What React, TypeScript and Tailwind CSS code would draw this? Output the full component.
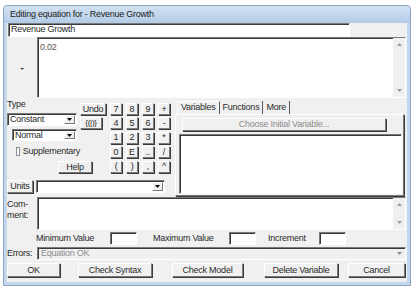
import React from 'react'

const raised =
  'border border-t-white border-l-white border-r-[#7a7a7a] border-b-[#7a7a7a] shadow-[1px_1px_0_#3a3a3a] bg-[#f0f0f0]'
const sunken =
  'border border-t-[#7a7a7a] border-l-[#7a7a7a] border-r-white border-b-white shadow-[inset_1px_1px_0_#3a3a3a]'

const keys = ['7', '8', '9', '+', '4', '5', '6', '-', '1', '2', '3', '*', '0', 'E', '..', '/', '(', ')', ',', '^']

function Tri({ up = false, color = '#000' }: { up?: boolean; color?: string }) {
  return (
    <svg width="5" height="3" viewBox="0 0 5 3">
      <path d={up ? 'M0 3h5L2.5 0z' : 'M0 0h5L2.5 3z'} fill={color} />
    </svg>
  )
}

function Btn({ className = '', children }: { className?: string; children?: React.ReactNode }) {
  return (
    <div className={`${raised} flex items-center justify-center leading-none ${className}`}>{children}</div>
  )
}

function Select({ className = '', text }: { className?: string; text?: string }) {
  return (
    <div className={`${sunken} bg-white flex items-stretch ${className}`}>
      <span className="flex-1 pl-[2px] flex items-center leading-none">{text}</span>
      <div className={`${raised} w-[11px] my-[1px] mr-[1px] flex items-center justify-center shadow-none`}>
        <Tri />
      </div>
    </div>
  )
}

function ScrollBar() {
  return (
    <div className="w-[12px] bg-[#f0f0f0] flex flex-col justify-between items-center py-[5px]">
      <Tri up color="#9a9a9a" />
      <Tri color="#9a9a9a" />
    </div>
  )
}

export default function App() {
  return (
    <div className="w-[416px] h-[290px] bg-white pl-[3px] pt-[5px] font-['Liberation_Sans',Arial,sans-serif] text-[9px] tracking-[-0.25px] text-[#2a2a2a]">
      <div className="w-[408px] h-[281px] bg-[#c4d7ed] border border-[#8da3bf] rounded-t-[4px] px-[3px] pb-[3px] flex flex-col">
        {/* title bar */}
        <div className="h-[17px] shrink-0 -mx-[3px] px-[6px] flex items-center rounded-t-[4px] bg-gradient-to-b from-[#d3e2f3] to-[#b3cbe7] text-[#222]">
          Editing equation for - Revenue Growth
        </div>

        <div className="flex-1 bg-[#f0f0f0] flex flex-col">
          {/* name */}
          <div className="h-[14px] flex">
            <div className={`${sunken} bg-white w-[342px] ml-[1px] flex items-center pl-[2px]`}>Revenue Growth</div>
          </div>

          {/* equation */}
          <div className="h-[61px] flex">
            <div className="w-[30px] flex items-center justify-center font-bold text-[10px]">-</div>
            <div className={`${sunken} bg-white flex-1 mr-[1px] flex`}>
              <div className="flex-1 pl-[2px] pt-[3px] text-[#555]">0.02</div>
              <ScrollBar />
            </div>
          </div>

          {/* middle */}
          <div className="h-[97px] mt-[1px] flex">
            <div className="w-[165px] flex flex-col">
              <div className="flex">
                <div className="w-[103px] flex flex-col">
                  <div className="flex">
                    <div className="w-[73px] flex flex-col">
                      <div className="h-[10px] leading-[10px]">Type</div>
                      <Select className="mt-[4px] h-[13px] w-[70px]" text="Constant" />
                      <Select className="mt-[3px] ml-[5px] h-[12px] w-[65px]" text="Normal" />
                      <div className="mt-[6px] ml-[9px] h-[9px] flex items-center gap-[3px]">
                        <div className="w-[9px] h-[9px] bg-white border border-[#8a8a8a]" />
                        <span>Supplementary</span>
                      </div>
                    </div>
                    <div className="w-[30px] flex flex-col">
                      <Btn className="mt-[4px] h-[12px] w-[26px]">Undo</Btn>
                      <Btn className="mt-[2px] h-[12px] w-[22px] text-[8px]">{'{(|)}'}</Btn>
                    </div>
                  </div>
                  <Btn className="mt-[5px] ml-[51px] h-[12px] w-[34px]">Help</Btn>
                </div>
                <div className="mt-[4px] grid grid-cols-[repeat(4,12px)] gap-x-[4px] gap-y-[2px]">
                  {keys.map((k) => (
                    <Btn key={k} className="h-[12px]">
                      {k}
                    </Btn>
                  ))}
                </div>
              </div>
              <div className="mt-[7px] h-[13px] flex">
                <Btn className="w-[26px]">Units</Btn>
                <Select className="ml-[3px] w-[129px]" />
              </div>
            </div>

            {/* tabs */}
            <div className="ml-[3px] w-[229px] flex flex-col">
              <div className="mt-[2px] h-[13px] flex pl-[2px]">
                <div className="px-[3px] flex items-center border-t border-l border-white border-r border-r-[#5a5a5a]">Variables</div>
                <div className="px-[3px] flex items-center border-r border-[#5a5a5a]">Functions</div>
                <div className="px-[3px] flex items-center border-r border-[#5a5a5a]">More</div>
              </div>
              <div className={`${raised} flex-1 flex flex-col`}>
                <Btn className="mt-[3px] ml-[6px] w-[204px] h-[13px] text-[#8e8e8e]">Choose Initial Variable...</Btn>
                <div className={`${sunken} bg-white mt-[3px] ml-[3px] mr-[1px] mb-[1px] flex-1`} />
              </div>
            </div>
          </div>

          {/* comment */}
          <div className="h-[33px] mt-[1px] flex">
            <div className="w-[30px] leading-[11px] pt-[2px]">
              Com-
              <br />
              ment:
            </div>
            <div className={`${sunken} bg-white flex-1 mr-[1px] flex`}>
              <div className="flex-1" />
              <ScrollBar />
            </div>
          </div>

          {/* min / max / increment */}
          <div className="h-[13px] mt-[2px] flex items-stretch">
            <span className="ml-[29px] w-[74px] flex items-center">Minimum Value</span>
            <div className={`${sunken} bg-white w-[27px]`} />
            <span className="ml-[16px] w-[76px] flex items-center">Maximum Value</span>
            <div className={`${sunken} bg-white w-[27px]`} />
            <span className="ml-[12px] w-[51px] flex items-center">Increment</span>
            <div className={`${sunken} bg-white w-[27px]`} />
          </div>

          {/* errors */}
          <div className="h-[13px] mt-[2px] flex">
            <span className="w-[30px] flex items-center">Errors:</span>
            <div className={`${sunken} bg-[#f0f0f0] flex-1 mr-[1px] flex`}>
              <span className="flex-1 pl-[3px] flex items-center text-[#8e8e8e]">Equation OK</span>
              <div className="w-[11px] flex items-center justify-center">
                <Tri color="#8a8a8a" />
              </div>
            </div>
          </div>

          {/* buttons */}
          <div className="h-[14px] mt-[3px] flex">
            <Btn className="w-[53px]">OK</Btn>
            <Btn className="ml-[18px] w-[74px]">Check Syntax</Btn>
            <Btn className="ml-[20px] w-[71px]">Check Model</Btn>
            <Btn className="ml-[21px] w-[74px]">Delete Variable</Btn>
            <Btn className="ml-[10px] w-[57px]">Cancel</Btn>
          </div>
        </div>
      </div>
    </div>
  )
}
